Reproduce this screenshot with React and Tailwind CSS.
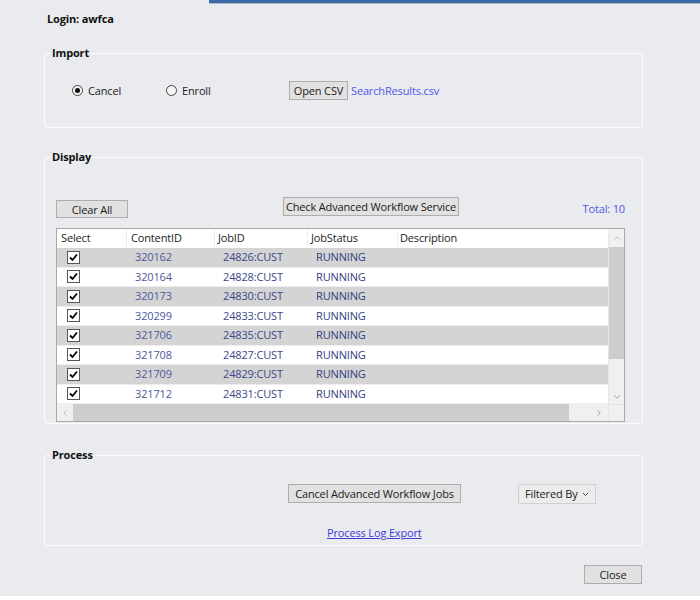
import { ChevronUp, ChevronDown, ChevronLeft, ChevronRight } from "lucide-react";

const ROWS = [
  ["320162", "24826:CUST"],
  ["320164", "24828:CUST"],
  ["320173", "24830:CUST"],
  ["320299", "24833:CUST"],
  ["321706", "24835:CUST"],
  ["321708", "24827:CUST"],
  ["321709", "24829:CUST"],
  ["321712", "24831:CUST"],
];

const COLS = "grid grid-cols-[70px_88px_93px_90px_1fr]";

function Btn({ className = "", children }) {
  return (
    <button className={`flex items-center justify-center border border-[#adadad] bg-[#e1e1e1] text-[11px] leading-none text-[#1a1a1a] ${className}`}>
      {children}
    </button>
  );
}

function Group({ title, className = "", children }) {
  return (
    <fieldset className={`ml-[44px] w-[599px] rounded-[3px] border border-[#fbfcfd] ${className}`}>
      <legend className="ml-[5px] px-[2px] text-[11px] font-bold leading-4 text-[#111]">{title}</legend>
      {children}
    </fieldset>
  );
}

function Radio({ checked, label, className = "" }) {
  return (
    <label className={`flex items-center gap-[5px] ${className}`}>
      <span className="flex h-[11px] w-[11px] items-center justify-center rounded-full border border-[#444] bg-[#f4f4f4]">
        {checked && <span className="h-[5px] w-[5px] rounded-full bg-[#111]" />}
      </span>
      <span className="text-[11px] leading-4 text-[#222]">{label}</span>
    </label>
  );
}

function Check() {
  return (
    <span className="flex h-[13px] w-[13px] items-center justify-center border border-[#555] bg-white">
      <svg width="11" height="11" viewBox="0 0 11 11">
        <polyline points="2,5.5 4.5,8 9,2.5" fill="none" stroke="#000" strokeWidth="1.8" />
      </svg>
    </span>
  );
}

export default function App() {
  return (
    <div className="flex h-[600px] w-[700px] flex-col overflow-hidden bg-[#e9ebef] font-['Open_Sans',sans-serif] tracking-[-0.15px]">
      {/* title bar edge */}
      <div className="flex h-[4px]">
        <div className="w-[209px]" />
        <div className="flex-1 border-b border-[#b4bac4] bg-[#3c69a7]" />
      </div>

      <div className="ml-[47px] mt-[7px] text-[11px] font-bold leading-4 text-[#111]">Login: awfca</div>

      {/* Import */}
      <Group title="Import" className="mt-[18px] pb-[27px] pt-[20px]">
        <div className="flex h-[19px] items-center">
          <Radio checked label="Cancel" className="ml-[27px] w-[94px]" />
          <Radio label="Enroll" className="w-[123px]" />
          <Btn className="h-[19px] w-[59px]">Open CSV</Btn>
          <span className="ml-[3px] text-[11px] leading-4 text-[#4f55ea]">SearchResults.csv</span>
        </div>
      </Group>

      {/* Display */}
      <Group title="Display" className="mt-[21px] pb-[1px] pt-[32px]">
        <div className="pl-[11px]">
          <div className="flex h-[21px] w-[569px] items-start">
            <Btn className="mt-[3px] h-[18px] w-[72px]">Clear All</Btn>
            <Btn className="ml-[155px] h-[19px] w-[176px]">Check Advanced Workflow Service</Btn>
            <span className="ml-auto mt-[4px] text-[11px] leading-4 text-[#4f55ea]">Total: 10</span>
          </div>

          <div className="mt-[10px] flex h-[194px] w-[569px] border border-[#a8a8a8] bg-white">
            <div className="flex w-[551px] flex-col">
              <div className={`${COLS} h-[19px] items-center bg-white text-[11px] text-[#222]`}>
                <span className="border-r border-[#ececec] pl-[4px]">Select</span>
                <span className="border-r border-[#ececec] pl-[4px]">ContentID</span>
                <span className="border-r border-[#ececec] pl-[3px]">JobID</span>
                <span className="border-r border-[#ececec] pl-[3px]">JobStatus</span>
                <span className="pl-[2px]">Description</span>
              </div>
              {ROWS.map(([cid, jid], i) => (
                <div
                  key={cid}
                  className={`${COLS} h-[19.5px] items-center border-b border-[#ededed] text-[11px] ${i % 2 === 0 ? "bg-[#d4d4d4]" : "bg-white"}`}
                >
                  <span className="pl-[10px]"><Check /></span>
                  <span className="pl-[8px] text-[#4b5a9c]">{cid}</span>
                  <span className="pl-[8px] text-[#3a4888]">{jid}</span>
                  <span className="pl-[8px] text-[#2f3d80]">RUNNING</span>
                  <span />
                </div>
              ))}
              {/* horizontal scrollbar */}
              <div className="flex h-[17px] items-center bg-[#f0f0f0]">
                <span className="flex w-[16px] justify-center text-[#a0a0a0]"><ChevronLeft size={10} strokeWidth={1.5} /></span>
                <span className="h-full w-[496px] bg-[#cdcdcd]" />
                <span className="flex flex-1 justify-end pr-[4px] text-[#707070]"><ChevronRight size={10} strokeWidth={1.5} /></span>
              </div>
            </div>

            {/* vertical scrollbar */}
            <div className="flex w-[16px] flex-col border-l border-[#e6e6e6] bg-[#f0f0f0]">
              <span className="flex h-[18px] items-center justify-center text-[#a0a0a0]"><ChevronUp size={10} strokeWidth={1.5} /></span>
              <span className="h-[112px] bg-[#cdcdcd]" />
              <span className="flex flex-1 items-end justify-center pb-[2px] text-[#707070]"><ChevronDown size={10} strokeWidth={1.5} /></span>
              <span className="h-[17px] border-t border-[#e4e4e4] bg-[#f0f0f0]" />
            </div>
          </div>
        </div>
      </Group>

      {/* Process */}
      <Group title="Process" className="mt-[23px] pb-[4px] pt-[21px]">
        <div className="flex h-[20px] items-start">
          <Btn className="ml-[243px] h-[19px] w-[173px]">Cancel Advanced Workflow Jobs</Btn>
          <div className="ml-[57px] flex h-[20px] w-[78px] items-center justify-between border border-[#d0d0d0] bg-[#ececec] pl-[6px] pr-[6px] text-[11px] text-[#222]">
            <span>Filtered By</span>
            <svg width="7" height="5" viewBox="0 0 7 5">
              <polyline points="1,1 3.5,3.5 6,1" fill="none" stroke="#444" strokeWidth="1" />
            </svg>
          </div>
        </div>
        <div className="ml-[282px] mt-[21px] text-[11px] leading-4 text-[#3b3bd8] underline">Process Log Export</div>
      </Group>

      <Btn className="ml-[584px] mt-[19px] h-[19px] w-[58px]">Close</Btn>

      <div className="mt-auto h-[4px] bg-white" />
    </div>
  );
}
